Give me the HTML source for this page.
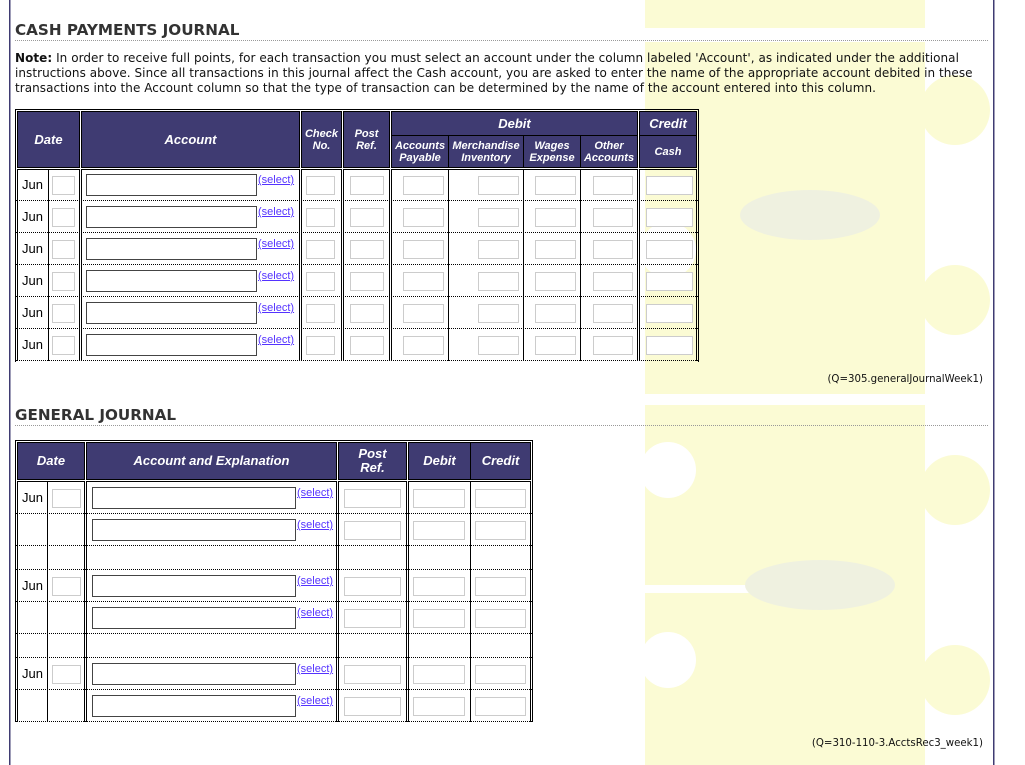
<!DOCTYPE html>
<html><head><meta charset="utf-8">
<style>
*{margin:0;padding:0;box-sizing:border-box}
body{width:1025px;height:765px;background:#fff;position:relative;overflow:hidden;font-family:"DejaVu Sans",Verdana,sans-serif}
.a{position:absolute}
.c{position:absolute;border:1px solid #000;background:#3f3b72;color:#fff;font:bold italic 12px "Liberation Sans",Arial,sans-serif;display:flex;align-items:center;justify-content:center;text-align:center;line-height:12px}
.c.s{font-size:11px;line-height:12px}
.bd{position:absolute;border:1px solid #000;border-bottom:none}
.row{border-bottom:1px dotted #000}
.j{position:absolute;font:13px "Liberation Sans",Arial,sans-serif;color:#000}
.i{position:absolute;border:1px solid #ccc;background:#fff;height:19px}
.t{position:absolute;border:1px solid #444;background:#fff;height:22px}
.l{position:absolute;font:11px "Liberation Sans",Arial,sans-serif;color:#5533ff;text-decoration:underline}
.vl{position:absolute;width:1px;background:#000}
.h2{position:absolute;left:15px;font:bold 15.2px "DejaVu Sans",Verdana,sans-serif;color:#333}
.dl{position:absolute;left:15px;width:973px;border-top:1px dotted #999}
.note{position:absolute;left:15px;top:51px;font:12px/15px "DejaVu Sans",Verdana,sans-serif;color:#111;white-space:nowrap;letter-spacing:0.05px}
.q{position:absolute;font:10.2px "DejaVu Sans",Verdana,sans-serif;color:#111}
</style></head><body>
<svg class="a" style="left:0;top:0" width="1025" height="765">
<g fill="#fbfbd4">
<rect x="645" y="0" width="280" height="28"/>
<rect x="645" y="42" width="280" height="352"/>
<rect x="645" y="405" width="280" height="360"/>
<circle cx="955" cy="110" r="35"/><circle cx="955" cy="300" r="35"/>
<circle cx="955" cy="490" r="35"/><circle cx="955" cy="680" r="35"/>
</g>
<g fill="#fff">
<circle cx="668" cy="250" r="28"/><circle cx="668" cy="470" r="28"/><circle cx="668" cy="660" r="28"/>
<rect x="645" y="585" width="180" height="8"/>
</g>
<ellipse cx="810" cy="215" rx="70" ry="25" fill="#eff1e0"/>
<ellipse cx="820" cy="585" rx="75" ry="25" fill="#eff1e0"/>
<rect x="9" y="0" width="1.5" height="765" fill="#3f3b72"/>
<rect x="993" y="0" width="1.5" height="765" fill="#3f3b72"/>
</svg>

<div class="h2" style="top:21px">CASH PAYMENTS JOURNAL</div>
<div class="dl" style="top:40px"></div>
<div class="note"><b>Note:</b> In order to receive full points, for each transaction you must select an account under the column labeled 'Account', as indicated under the additional<br>instructions above. Since all transactions in this journal affect the Cash account, you are asked to enter the name of the appropriate account debited in these<br>transactions into the Account column so that the type of transaction can be determined by the name of the account entered into this column.</div>

<div class="bd" style="left:15px;top:109px;width:684px;height:253px"></div>
<div class="c" style="left:17px;top:111px;width:63px;height:57px;font-size:13px">Date</div>
<div class="c" style="left:81px;top:111px;width:219px;height:57px;font-size:13px">Account</div>
<div class="c s" style="left:301px;top:111px;width:41px;height:57px">Check<br>No.</div>
<div class="c s" style="left:343px;top:111px;width:47px;height:57px">Post<br>Ref.</div>
<div class="c" style="left:391px;top:111px;width:247px;height:25px;font-size:13px">Debit</div>
<div class="c" style="left:639px;top:111px;width:58px;height:25px;font-size:13px">Credit</div>
<div class="c s" style="left:391px;top:135px;width:58px;height:33px">Accounts<br>Payable</div>
<div class="c s" style="left:448px;top:135px;width:76px;height:33px">Merchandise<br>Inventory</div>
<div class="c s" style="left:523px;top:135px;width:58px;height:33px">Wages<br>Expense</div>
<div class="c s" style="left:580px;top:135px;width:58px;height:33px">Other<br>Accounts</div>
<div class="c s" style="left:639px;top:135px;width:58px;height:33px">Cash</div>

<div class="bd" style="left:17px;top:169px;width:63px;height:192px"></div>
<div class="bd" style="left:81px;top:169px;width:219px;height:192px"></div>
<div class="bd" style="left:301px;top:169px;width:41px;height:192px"></div>
<div class="bd" style="left:343px;top:169px;width:47px;height:192px"></div>
<div class="bd" style="left:391px;top:169px;width:58px;height:192px"></div>
<div class="bd" style="left:448px;top:169px;width:76px;height:192px"></div>
<div class="bd" style="left:523px;top:169px;width:58px;height:192px"></div>
<div class="bd" style="left:580px;top:169px;width:58px;height:192px"></div>
<div class="bd" style="left:639px;top:169px;width:58px;height:192px"></div>
<div class="vl" style="left:48px;top:169px;height:192px"></div>
<div class="a row" style="left:16px;top:169px;width:682px;height:32px"></div>
<div class="a row" style="left:16px;top:201px;width:682px;height:32px"></div>
<div class="a row" style="left:16px;top:233px;width:682px;height:32px"></div>
<div class="a row" style="left:16px;top:265px;width:682px;height:32px"></div>
<div class="a row" style="left:16px;top:297px;width:682px;height:32px"></div>
<div class="a row" style="left:16px;top:329px;width:682px;height:32px"></div>

<div class="j" style="left:22px;top:177px">Jun</div><div class="i" style="left:52px;top:176px;width:23px"></div><div class="t" style="left:86px;top:174px;width:171px"></div><div class="l" style="left:258px;top:174px">(select)</div><div class="i" style="left:306px;top:176px;width:29px"></div><div class="i" style="left:350px;top:176px;width:34px"></div><div class="i" style="left:403px;top:176px;width:41px"></div><div class="i" style="left:478px;top:176px;width:41px"></div><div class="i" style="left:535px;top:176px;width:41px"></div><div class="i" style="left:593px;top:176px;width:40px"></div><div class="i" style="left:646px;top:176px;width:47px"></div>
<div class="j" style="left:22px;top:209px">Jun</div><div class="i" style="left:52px;top:208px;width:23px"></div><div class="t" style="left:86px;top:206px;width:171px"></div><div class="l" style="left:258px;top:206px">(select)</div><div class="i" style="left:306px;top:208px;width:29px"></div><div class="i" style="left:350px;top:208px;width:34px"></div><div class="i" style="left:403px;top:208px;width:41px"></div><div class="i" style="left:478px;top:208px;width:41px"></div><div class="i" style="left:535px;top:208px;width:41px"></div><div class="i" style="left:593px;top:208px;width:40px"></div><div class="i" style="left:646px;top:208px;width:47px"></div>
<div class="j" style="left:22px;top:241px">Jun</div><div class="i" style="left:52px;top:240px;width:23px"></div><div class="t" style="left:86px;top:238px;width:171px"></div><div class="l" style="left:258px;top:238px">(select)</div><div class="i" style="left:306px;top:240px;width:29px"></div><div class="i" style="left:350px;top:240px;width:34px"></div><div class="i" style="left:403px;top:240px;width:41px"></div><div class="i" style="left:478px;top:240px;width:41px"></div><div class="i" style="left:535px;top:240px;width:41px"></div><div class="i" style="left:593px;top:240px;width:40px"></div><div class="i" style="left:646px;top:240px;width:47px"></div>
<div class="j" style="left:22px;top:273px">Jun</div><div class="i" style="left:52px;top:272px;width:23px"></div><div class="t" style="left:86px;top:270px;width:171px"></div><div class="l" style="left:258px;top:270px">(select)</div><div class="i" style="left:306px;top:272px;width:29px"></div><div class="i" style="left:350px;top:272px;width:34px"></div><div class="i" style="left:403px;top:272px;width:41px"></div><div class="i" style="left:478px;top:272px;width:41px"></div><div class="i" style="left:535px;top:272px;width:41px"></div><div class="i" style="left:593px;top:272px;width:40px"></div><div class="i" style="left:646px;top:272px;width:47px"></div>
<div class="j" style="left:22px;top:305px">Jun</div><div class="i" style="left:52px;top:304px;width:23px"></div><div class="t" style="left:86px;top:302px;width:171px"></div><div class="l" style="left:258px;top:302px">(select)</div><div class="i" style="left:306px;top:304px;width:29px"></div><div class="i" style="left:350px;top:304px;width:34px"></div><div class="i" style="left:403px;top:304px;width:41px"></div><div class="i" style="left:478px;top:304px;width:41px"></div><div class="i" style="left:535px;top:304px;width:41px"></div><div class="i" style="left:593px;top:304px;width:40px"></div><div class="i" style="left:646px;top:304px;width:47px"></div>
<div class="j" style="left:22px;top:337px">Jun</div><div class="i" style="left:52px;top:336px;width:23px"></div><div class="t" style="left:86px;top:334px;width:171px"></div><div class="l" style="left:258px;top:334px">(select)</div><div class="i" style="left:306px;top:336px;width:29px"></div><div class="i" style="left:350px;top:336px;width:34px"></div><div class="i" style="left:403px;top:336px;width:41px"></div><div class="i" style="left:478px;top:336px;width:41px"></div><div class="i" style="left:535px;top:336px;width:41px"></div><div class="i" style="left:593px;top:336px;width:40px"></div><div class="i" style="left:646px;top:336px;width:47px"></div>

<div class="q" style="right:42px;top:374px">(Q=305.generalJournalWeek1)</div>

<div class="h2" style="top:406px">GENERAL JOURNAL</div>
<div class="dl" style="top:425px"></div>

<div class="bd" style="left:15px;top:440px;width:518px;height:282px"></div>
<div class="c" style="left:17px;top:442px;width:68px;height:38px;font-size:13px">Date</div>
<div class="c" style="left:86px;top:442px;width:251px;height:38px;font-size:13px">Account and Explanation</div>
<div class="c" style="left:338px;top:442px;width:69px;height:38px;font-size:13px;line-height:14px">Post<br>Ref.</div>
<div class="c" style="left:408px;top:442px;width:63px;height:38px;font-size:13px">Debit</div>
<div class="c" style="left:470px;top:442px;width:61px;height:38px;font-size:13px">Credit</div>

<div class="bd" style="left:17px;top:481px;width:68px;height:241px"></div>
<div class="bd" style="left:86px;top:481px;width:251px;height:241px"></div>
<div class="bd" style="left:338px;top:481px;width:69px;height:241px"></div>
<div class="bd" style="left:408px;top:481px;width:63px;height:241px"></div>
<div class="bd" style="left:470px;top:481px;width:61px;height:241px"></div>
<div class="vl" style="left:47px;top:481px;height:241px"></div>
<div class="a row" style="left:16px;top:481px;width:516px;height:33px"></div>
<div class="a row" style="left:16px;top:514px;width:516px;height:32px"></div>
<div class="a row" style="left:16px;top:546px;width:516px;height:24px"></div>
<div class="a row" style="left:16px;top:570px;width:516px;height:32px"></div>
<div class="a row" style="left:16px;top:602px;width:516px;height:32px"></div>
<div class="a row" style="left:16px;top:634px;width:516px;height:24px"></div>
<div class="a row" style="left:16px;top:658px;width:516px;height:32px"></div>
<div class="a row" style="left:16px;top:690px;width:516px;height:32px"></div>

<div class="j" style="left:22px;top:490px">Jun</div><div class="i" style="left:52px;top:489px;width:29px"></div><div class="t" style="left:92px;top:487px;width:204px"></div><div class="l" style="left:297px;top:487px">(select)</div><div class="i" style="left:344px;top:489px;width:57px"></div><div class="i" style="left:413px;top:489px;width:52px"></div><div class="i" style="left:475px;top:489px;width:51px"></div>
<div class="t" style="left:92px;top:519px;width:204px"></div><div class="l" style="left:297px;top:519px">(select)</div><div class="i" style="left:344px;top:521px;width:57px"></div><div class="i" style="left:413px;top:521px;width:52px"></div><div class="i" style="left:475px;top:521px;width:51px"></div>
<div class="j" style="left:22px;top:578px">Jun</div><div class="i" style="left:52px;top:577px;width:29px"></div><div class="t" style="left:92px;top:575px;width:204px"></div><div class="l" style="left:297px;top:575px">(select)</div><div class="i" style="left:344px;top:577px;width:57px"></div><div class="i" style="left:413px;top:577px;width:52px"></div><div class="i" style="left:475px;top:577px;width:51px"></div>
<div class="t" style="left:92px;top:607px;width:204px"></div><div class="l" style="left:297px;top:607px">(select)</div><div class="i" style="left:344px;top:609px;width:57px"></div><div class="i" style="left:413px;top:609px;width:52px"></div><div class="i" style="left:475px;top:609px;width:51px"></div>
<div class="j" style="left:22px;top:666px">Jun</div><div class="i" style="left:52px;top:665px;width:29px"></div><div class="t" style="left:92px;top:663px;width:204px"></div><div class="l" style="left:297px;top:663px">(select)</div><div class="i" style="left:344px;top:665px;width:57px"></div><div class="i" style="left:413px;top:665px;width:52px"></div><div class="i" style="left:475px;top:665px;width:51px"></div>
<div class="t" style="left:92px;top:695px;width:204px"></div><div class="l" style="left:297px;top:695px">(select)</div><div class="i" style="left:344px;top:697px;width:57px"></div><div class="i" style="left:413px;top:697px;width:52px"></div><div class="i" style="left:475px;top:697px;width:51px"></div>

<div class="q" style="right:42px;top:738px">(Q=310-110-3.AcctsRec3_week1)</div>
</body></html>
